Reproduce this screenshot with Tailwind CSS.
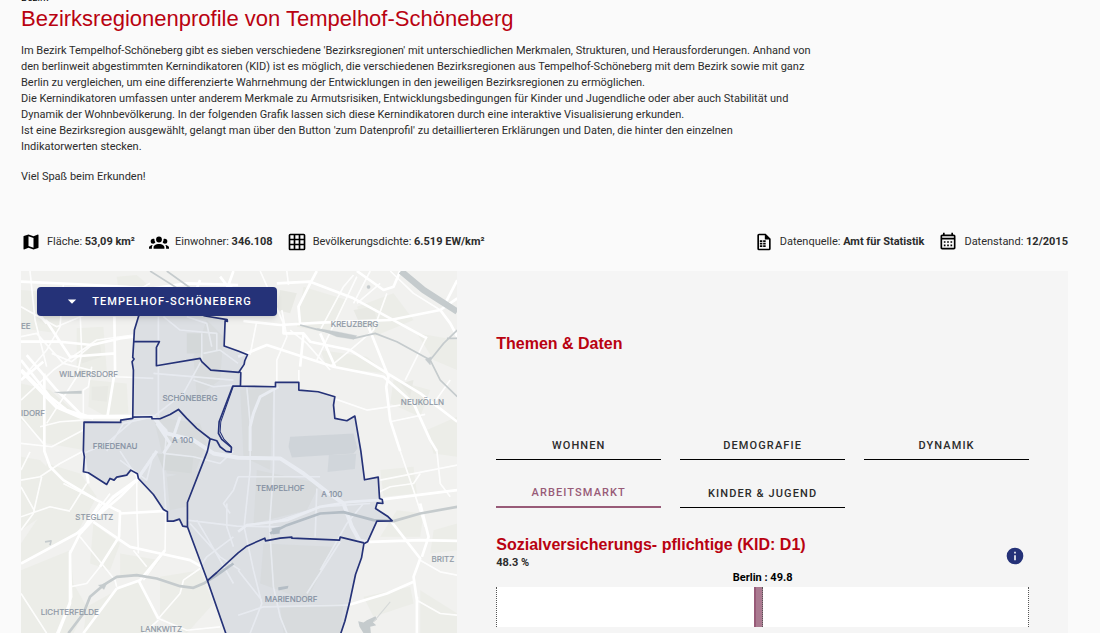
<!DOCTYPE html>
<html lang="de">
<head>
<meta charset="utf-8">
<meta name="viewport" content="width=device-width, initial-scale=1">
<title>Bezirksregionenprofile von Tempelhof-Schöneberg</title>
<script src="https://cdn.jsdelivr.net/npm/@tailwindcss/browser@4"></script>
</head>
<body class="bg-[#fafafa] font-[Roboto,sans-serif] text-[11px] text-[#2c2c2c]">
<main class="flex h-screen flex-col overflow-hidden pl-[21px] pr-8">
  <header class="-mt-2 max-w-[800px] shrink-0">
    <p class="h-[15px] text-[10px] leading-3 text-black">Bezirk</p>
    <h1 class="font-['Liberation_Sans',sans-serif] text-[22px] leading-6 text-[#b90211]">Bezirksregionenprofile von Tempelhof-Schöneberg</h1>
    <div class="mt-3 leading-4">
      <p>Im Bezirk Tempelhof-Schöneberg gibt es sieben verschiedene 'Bezirksregionen' mit unterschiedlichen Merkmalen, Strukturen, und Herausforderungen. Anhand von<br>den berlinweit abgestimmten Kernindikatoren (KID) ist es möglich, die verschiedenen Bezirksregionen aus Tempelhof-Schöneberg mit dem Bezirk sowie mit ganz<br>Berlin zu vergleichen, um eine differenzierte Wahrnehmung der Entwicklungen in den jeweiligen Bezirksregionen zu ermöglichen.</p>
      <p>Die Kernindikatoren umfassen unter anderem Merkmale zu Armutsrisiken, Entwicklungsbedingungen für Kinder und Jugendliche oder aber auch Stabilität und<br>Dynamik der Wohnbevölkerung. In der folgenden Grafik lassen sich diese Kernindikatoren durch eine interaktive Visualisierung erkunden.</p>
      <p>Ist eine Bezirksregion ausgewählt, gelangt man über den Button 'zum Datenprofil' zu detaillierteren Erklärungen und Daten, die hinter den einzelnen<br>Indikatorwerten stecken.</p>
      <p class="mt-[14px]">Viel Spaß beim Erkunden!</p>
    </div>
  </header>

  <section class="mt-[47px] flex shrink-0 items-center justify-between" aria-label="Kennzahlen">
    <ul class="flex gap-[14px]">
      <li class="flex items-center gap-[6px]">
        <svg class="size-5 text-black" viewBox="0 0 24 24" fill="currentColor"><path d="M15,19L9,16.89V5L15,7.11M20.5,3C20.44,3 20.39,3 20.34,3L15,5.1L9,3L3.36,4.9C3.15,4.97 3,5.15 3,5.38V20.5A0.5,0.5 0 0,0 3.5,21C3.55,21 3.61,21 3.66,20.97L9,18.9L15,21L20.64,19.1C20.85,19 21,18.85 21,18.62V3.5A0.5,0.5 0 0,0 20.5,3Z"/></svg>
        <span>Fläche: <b>53,09 km²</b></span>
      </li>
      <li class="flex items-center gap-[6px]">
        <svg class="size-5 text-black" viewBox="0 0 24 24" fill="currentColor"><path d="M12,5.5A3.5,3.5 0 0,1 15.5,9A3.5,3.5 0 0,1 12,12.5A3.5,3.5 0 0,1 8.5,9A3.5,3.5 0 0,1 12,5.5M5,8C5.56,8 6.08,8.15 6.53,8.42C6.38,9.85 6.8,11.27 7.66,12.38C7.16,13.34 6.16,14 5,14A3,3 0 0,1 2,11A3,3 0 0,1 5,8M19,8A3,3 0 0,1 22,11A3,3 0 0,1 19,14C17.84,14 16.84,13.34 16.34,12.38C17.2,11.27 17.62,9.85 17.47,8.42C17.92,8.15 18.44,8 19,8M5.5,18.25C5.5,16.18 8.41,14.5 12,14.5C15.59,14.5 18.5,16.18 18.5,18.25V20H5.5V18.25M0,20V18.5C0,17.11 1.89,15.94 4.45,15.6C3.86,16.28 3.5,17.22 3.5,18.25V20H0M24,20H20.5V18.25C20.5,17.22 20.14,16.28 19.55,15.6C22.11,15.94 24,17.11 24,18.5V20Z"/></svg>
        <span>Einwohner: <b>346.108</b></span>
      </li>
      <li class="flex items-center gap-[6px]">
        <svg class="size-5 text-black" viewBox="0 0 24 24" fill="currentColor"><path d="M10,4V8H14V4H10M16,4V8H20V4H16M16,10V14H20V10H16M16,16V20H20V16H16M14,20V16H10V20H14M8,20V16H4V20H8M8,14V10H4V14H8M8,8V4H4V8H8M10,14H14V10H10V14M4,2H20A2,2 0 0,1 22,4V20A2,2 0 0,1 20,22H4C2.92,22 2,21.1 2,20V4A2,2 0 0,1 4,2Z"/></svg>
        <span>Bevölkerungsdichte: <b>6.519 EW/km²</b></span>
      </li>
    </ul>
    <ul class="flex gap-[14px]">
      <li class="flex items-center gap-[6px]">
        <svg class="size-5 text-black" viewBox="0 0 24 24" fill="currentColor"><path d="M14,2H6A2,2 0 0,0 4,4V20A2,2 0 0,0 6,22H18A2,2 0 0,0 20,20V8L14,2M18,20H6V4H13V9H18V20M7,10H10V12H7ZM11,10H14V12H11ZM7,13H10V15H7ZM11,13H14V15H11ZM7,16H10V18H7ZM11,16H14V18H11Z"/></svg>
        <span>Datenquelle: <b>Amt für Statistik</b></span>
      </li>
      <li class="flex items-center gap-[6px]">
        <svg class="size-5 text-black" viewBox="0 0 24 24" fill="currentColor"><path d="M7 11H9V13H7V11M21 5V19C21 20.11 20.11 21 19 21H5C3.89 21 3 20.1 3 19V5C3 3.9 3.9 3 5 3H6V1H8V3H16V1H18V3H19C20.11 3 21 3.9 21 5M5 7H19V5H5V7M19 19V9H5V19H19M15 13V11H17V13H15M11 13V11H13V13H11M7 15H9V17H7V15M15 17V15H17V17H15M11 17V15H13V17H11Z"/></svg>
        <span>Datenstand: <b>12/2015</b></span>
      </li>
    </ul>
  </section>

  <div class="mt-[19px] grid min-h-0 flex-1 grid-cols-12 bg-[#f5f5f5]">
    <section class="relative col-span-5 min-h-0 overflow-hidden" aria-label="Karte">
      <svg class="size-full" viewBox="3 3 1308 1086" preserveAspectRatio="xMinYMin slice" fill="none">
        <rect width="1320" height="1100" fill="#f1f1ef"/>
        <!-- built-up areas -->
        <g fill="#ecede8">
          <path d="M3 60L130 70 115 190 3 175zM170 175L250 170 260 300 170 320zM3 340L90 360 180 440 190 540 80 520 3 450zM210 330L320 340 325 430 250 435 205 410zM290 20L350 15 400 60 400 110 300 90zM3 560L60 570 130 640 90 720 3 780zM80 580L180 610 230 680 170 790 3 880V820L70 720zM3 900L150 840 160 940 200 1010 160 1089H3zM220 760L300 820 270 900 210 880zM300 850L420 870 380 920 300 920zM420 920L540 900 580 1000 500 1089 420 1040zM200 1010L290 960 360 930 410 1050 380 1089H190z"/>
          <path d="M400 440L540 460 560 520 520 620 440 610zM440 620L540 600 500 710 450 720zM560 150L610 200 600 330 530 380 520 260zM660 360L760 355 750 600 670 560zM710 600L900 640 860 720 700 760zM730 820L940 830 860 990 720 940zM780 1010L970 1000 960 1089H790z"/>
          <path d="M850 50L980 90 930 190 830 170zM1010 110L1120 70 1180 150 1060 200zM900 240L1040 260 1100 310 920 290zM1120 330L1230 360 1200 440 1110 400zM1190 190L1311 210V300L1240 270zM1220 480L1311 440V560L1240 550zM1080 600L1180 590 1190 670 1090 680zM1130 720L1210 730 1200 800 1080 800zM1200 960L1311 1030V1089H1200zM1030 980L1170 950 1180 1000 1060 1040zM1240 780L1311 760V840L1230 850z"/>
        </g>
        <!-- smaller blocks -->
        <g fill="#e8e9e4">
          <path d="M180 225L240 220 245 260 185 280zM215 350L265 348 260 395 215 390zM290 55L330 45 340 80 300 88zM500 190L550 190 545 250 500 250zM410 550L520 560 515 610 430 600zM1000 120L1060 110 1070 150 1020 165zM780 60L830 70 810 130 770 120zM1140 340L1180 330 1170 380z"/>
          <path d="M810 500L1000 490 1012 535 1000 550 815 562 805 530z" fill="#e3e5e4"/>
          <path d="M926 555L1008 551 1004 597 922 606z" fill="#e5e7e6"/>
        </g>
        <!-- minor streets -->
        <g stroke="#fff" stroke-width="5" stroke-linejoin="round" opacity=".9">
          <path d="M30 3L45 150 80 290M3 110L110 170 300 90 390 40M130 45L120 170 80 240 3 330M180 120L185 250 170 320 80 460M3 200L50 190 130 280 290 320 400 325M215 290L205 350 190 360 190 440M3 390L100 300 230 210 340 195M3 440L70 520M60 470L120 455 190 450M95 250L155 275 215 225"/>
          <path d="M415 140V440M400 310L640 330M545 190V270L490 370 400 440M550 250L600 240 654 280M520 330L580 350 640 345M430 140L480 180 590 190 590 240M500 140L560 160 575 230"/>
          <path d="M190 550L260 520 340 450M300 543L350 620 350 700 355 850M260 543L310 460 400 440 440 480 430 600 437 720 435 840 370 930M3 520L95 530 190 480M270 670L180 790M200 640L150 720M130 640L230 690"/>
          <path d="M430 550L520 560 600 580 640 543M400 550L380 630 300 570M500 750L650 768 780 770M530 750L560 800 640 940M640 800L560 860 540 890M620 700L620 770 640 830M654 620L640 660 610 700 630 730M510 760L600 860 660 900"/>
          <path d="M680 350L690 460 690 600 672 770 700 900 725 1000 690 1089M762 355L760 600 748 770 760 950 780 1040 800 1089M654 620L900 620M890 655L885 800M960 815L860 970M1030 700L980 760 900 900M654 900L725 990M654 1035L730 1010 990 1005M750 760L900 710 1050 700"/>
          <path d="M690 254L710 153M836 300V340M770 350L770 270 800 200 785 120M720 3L790 160M800 3L805 45M930 300L860 220 810 180M930 290L990 240 1060 180 1100 70M890 270L1010 20M1050 3L1000 100M1000 15L970 50 900 180M1220 200L1155 330M1010 100L1080 40M1290 330L1240 400M1110 455L1215 433M940 385L1040 420 1140 405"/>
          <path d="M1140 543L1180 660 1215 770M1250 543L1260 640 1290 680M1078 665L1110 650 1180 640 1200 610M1200 870L1260 905 1311 915M1190 990L1260 1030 1311 1035M1190 1089L1192 980M1080 630L1311 585M1110 3L1180 70 1260 120"/>
          <path d="M3 630L60 620 120 580 190 543M3 650L45 725M3 780L40 730 65 620M3 740L90 710 150 723M150 840L155 980 110 1089M3 970L80 1089M150 950L200 940 240 890 290 810M290 950L285 930 180 800M340 840L380 890M3 600L30 545M490 930L480 970 415 1045 500 1080 600 1070M415 1050L370 1089M490 930L540 895"/>
        </g>
        <!-- main streets -->
        <g stroke="#fff" stroke-width="8" stroke-linejoin="round">
          <path d="M3 35L160 42 400 55 500 40 654 45M77 150L150 260 285 250M55 130L80 160M283 140L285 300 262 440M3 215L120 215 215 225 300 205 340 200M73 310V543L90 590 130 630 230 690 300 725 297 800 240 890M3 270L90 380 140 420 200 440 340 440M20 255L110 360 180 430 220 445M3 330L70 275M300 60L380 120 440 90M540 30L520 80 560 140M600 20L654 90M640 3L625 45 654 70"/>
          <path d="M3 880L170 790 300 680 350 630 410 543M150 850L180 790 240 700M190 543L205 640M220 755L330 830 420 850 510 870 545 890M300 730L440 722M355 930L415 1045M290 955L360 930 435 840M290 955L190 1089M115 1089L150 1000 150 845"/>
          <path d="M670 153L780 165 900 158 1110 150 1260 120 1311 85M790 160V190L850 190 870 215 990 240 1110 315 1200 370 1311 455M654 260L740 225 940 290 1090 320 1180 400 1230 510 1250 543M850 190L840 290M840 165L835 110 870 40 890 3M770 40L870 35 1000 85 1220 205M1045 170L1105 320 1098 350 1110 450 1140 543M900 190L945 290"/>
          <path d="M1020 810L1050 815 1200 810 1311 812M1070 690L1311 660M1110 750L1200 865 1180 920 1190 990 1190 1089M1205 860L1225 800 1200 700M990 1003L1100 970 1180 935M654 785L680 765 800 750 900 710 990 695 1070 690"/>
          <path d="M1010 3L1090 60 1120 50 1140 3M1260 120L1290 160 1311 200M1311 30L1270 110"/>
        </g>
        <!-- motorway -->
        <g stroke="#fff" stroke-width="12" stroke-linejoin="round">
          <path d="M3 300L110 410 180 440 330 440 400 440 440 490 520 510 580 550 654 563 780 565 850 610 920 665 970 700 995 770 1020 815"/>
          <path d="M410 460L450 520 430 550M480 440L460 500 520 510" stroke-width="9"/>
          <path d="M410 543L350 630 280 680 180 790" stroke-width="10"/>
          <path d="M775 350L720 380 700 430 690 470 690 543" stroke-width="9"/>
        </g>
        <!-- water -->
        <g stroke="#c5cbcd" stroke-linejoin="round">
          <path d="M390 3L520 85 590 60M440 3L540 75" stroke-width="5"/>
          <path d="M1142 3L1210 60 1311 125" stroke-width="19"/>
          <path d="M840 165L890 178 1000 205 1065 190 1130 215 1230 270 1260 330 1311 380M1230 270L1270 220 1311 180M1280 205H1311" stroke-width="5"/>
          <path d="M890 175L950 185 1010 197 1000 208 950 200z" fill="#c5cbcd"/>
          <path d="M1215 268L1233 260 1230 285z" fill="#c5cbcd"/>
          <circle cx="1045" cy="51" r="5" fill="#c5cbcd"/>
          <path d="M145 1089L190 1030 210 980 250 945 290 920 350 915 410 925 480 948 520 953 550 940 590 915 640 880" stroke-width="8"/>
          <path d="M235 945L260 940 252 958z" fill="#c5cbcd"/>
          <path d="M750 790L800 765 900 730 970 726 1060 750 1120 753 1200 730 1311 710" stroke-width="8"/>
          <path d="M755 775L780 770 778 790 758 792z" fill="#c5cbcd"/>
          <path d="M75 815L93 812 90 825" stroke-width="5"/>
        </g>
        <path d="M100 366L185 362V371H125zM774 951L805 947 803 955 775 961zM1014 1053L1030 1057 1040 1050 1066 1038 1070 1048 1058 1056 1068 1065 1050 1070 1052 1089H1030L1018 1070z" fill="#c5cbcd"/>
        <path d="M1060 1055L1110 995" stroke="#d5d8d8" stroke-width="3"/>
        <!-- place names -->
        <g fill="#8f99a6" stroke="#8f99a6" stroke-width=".6" class="font-[Inter,sans-serif] text-[24px]">
          <text x="3" y="177">EE</text><text x="118" y="321">WILMERSDORF</text><text x="3" y="438">IDORF</text>
          <text x="427" y="392">SCHÖNEBERG</text><text x="456" y="518">A 100</text><text x="218" y="536">FRIEDENAU</text>
          <text x="932" y="170">KREUZBERG</text><text x="1142" y="406">NEUKÖLLN</text><text x="166" y="749">STEGLITZ</text>
          <text x="62" y="1034">LICHTERFELDE</text><text x="361" y="1086">LANKWITZ</text><text x="708" y="662">TEMPELHOF</text>
          <text x="903" y="681">A 100</text><text x="734" y="994">MARIENDORF</text><text x="1234" y="877">BRITZ</text>
        </g>
        <!-- district with its regions -->
        <g stroke="#253278" stroke-width="5" stroke-linejoin="round">
          <path fill="#27407f" fill-opacity=".1" d="M356 137L343 180 341 215 338 262 342 267 336 275 340 300 338 445 302 450V457L192 456 190 543 193 560 190 605 205 608 260 643 270 625 282 630 290 621 320 615 332 600 352 611 355 625 400 673 430 718 442 725V753H460L478 747 488 768 502 770 562 931 619 1095H960L974 1053 989 993 1006 913 1024 863 1031 821 1042 815 1070 753 1116 752 1104 740 1066 715 1071 698 1088 700 1086 688 1078 685 1074 621 1033 629 1022 543 1004 438 980 452 944 445 940 405 944 380 894 365 836 360V337H766V350L661 348 662 308 657 305 672 283 674 272 682 254 654 243 612 228 615 152 622 154 621 149 555 138 500 120 400 110z"/>
          <path d="M341 215H418L409 232V287L540 265 545 275 572 300 657 307M661 348H638L597 455 595 490 605 508 634 532 633 546 618 544 600 530 590 512 570 506 530 475 500 445 475 418 450 433 420 446H396L395 440 338 441M570 506L562 543 502 697V770"/>
          <path d="M562 931L590 907 654 848 680 828 734 804 736 812 780 804 815 801V804L958 810 960 801 1031 818"/>
          <path d="M640 347L602 455 600 485 612 508 634 530" stroke-width="3"/>
        </g>
      </svg>
      <button type="button" aria-haspopup="listbox" class="absolute left-4 top-4 flex h-[29px] w-60 items-center justify-center gap-[10px] rounded bg-[#253278] pt-px font-medium tracking-widest text-white shadow-md">
        <svg class="size-5" viewBox="0 0 24 24" fill="currentColor"><path d="M7,9L12,14L17,9H7Z"/></svg>
        TEMPELHOF-SCHÖNEBERG
      </button>
    </section>

    <section class="col-span-7 min-h-0 px-[39px] pt-[61px]">
      <h2 class="font-['Liberation_Sans',sans-serif] text-base font-bold leading-6 text-[#b90211]">Themen &amp; Daten</h2>
      <nav class="mt-[76px] grid grid-cols-3 gap-x-[19px] gap-y-5 font-medium" aria-label="Themen">
        <button type="button" class="h-7 border-b border-black pt-px tracking-widest">WOHNEN</button>
        <button type="button" class="h-7 border-b border-black pt-px tracking-widest">DEMOGRAFIE</button>
        <button type="button" class="h-7 border-b border-black pt-px tracking-widest">DYNAMIK</button>
        <button type="button" aria-current="true" class="h-7 border-b-2 border-[#985b78] tracking-widest text-[#985b78]">ARBEITSMARKT</button>
        <button type="button" class="h-7 border-b border-black pt-px tracking-widest">KINDER &amp; JUGEND</button>
      </nav>
      <div class="mt-[25px] flex items-center justify-between">
        <div>
          <h3 class="font-['Liberation_Sans',sans-serif] text-base font-bold leading-6 text-[#b90211]">Sozialversicherungs- pflichtige (KID: D1)</h3>
          <p class="font-bold leading-3">48.3 %</p>
        </div>
        <button type="button" aria-label="Information" class="mr-1 mt-[10px] text-[#253278]">
          <svg class="size-5" viewBox="0 0 24 24" fill="currentColor"><path d="M13,9H11V7H13M13,17H11V11H13M12,2A10,10 0 0,0 2,12A10,10 0 0,0 12,22A10,10 0 0,0 22,12A10,10 0 0,0 12,2Z"/></svg>
        </button>
      </div>
      <p class="mt-[3px] text-center font-bold leading-3 text-black">Berlin : 49.8</p>
      <div class="relative mt-[3px] h-10 border-x border-dotted border-[#555] bg-white">
        <div class="absolute inset-y-0 border-l-2 border-r border-l-[#985b78] border-r-[#555] bg-[#aa7a90] [border-right-style:dotted]" style="left:48.3%;width:1.7%"></div>
      </div>
    </section>
  </div>
</main>
</body>
</html>
